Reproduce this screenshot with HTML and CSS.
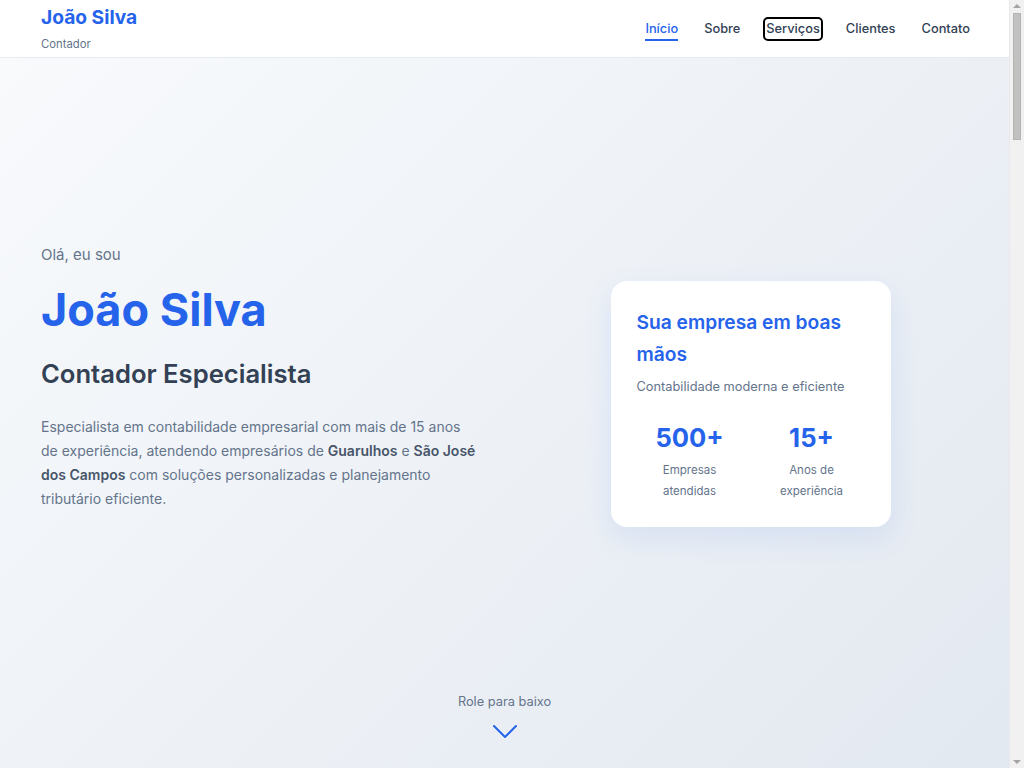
FILE: index.html
```html
<!DOCTYPE html>
<html lang="pt-BR">
<head>
<meta charset="utf-8">
<title>João Silva - Contador</title>
<link rel="stylesheet" href="styles.css">
</head>
<body>
<div class="page">
<header class="site-header">
  <div class="container header-inner">
    <div class="brand">
      <div class="brand-name">João Silva</div>
      <div class="brand-role">Contador</div>
    </div>
    <nav class="nav">
      <a href="#inicio" class="nav-link active">Início</a>
      <a href="#sobre" class="nav-link">Sobre</a>
      <a href="#servicos" class="nav-link focused">Serviços</a>
      <a href="#clientes" class="nav-link">Clientes</a>
      <a href="#contato" class="nav-link">Contato</a>
    </nav>
  </div>
</header>

<main>
  <section class="hero" id="inicio">
    <div class="container hero-grid">
      <div class="hero-text">
        <p class="hero-greeting">Olá, eu sou</p>
        <h1 class="hero-name">João Silva</h1>
        <h2 class="hero-title">Contador Especialista</h2>
        <p class="hero-desc">Especialista em contabilidade empresarial com mais de 15 anos de experiência, atendendo empresários de <strong>Guarulhos</strong> e <strong>São José dos Campos</strong> com soluções personalizadas e planejamento tributário eficiente.</p>
      </div>
      <div class="hero-card">
        <h3 class="card-title">Sua empresa em boas mãos</h3>
        <p class="card-sub">Contabilidade moderna e eficiente</p>
        <div class="stats">
          <div class="stat">
            <div class="stat-num">500+</div>
            <div class="stat-label">Empresas atendidas</div>
          </div>
          <div class="stat">
            <div class="stat-num">15+</div>
            <div class="stat-label">Anos de experiência</div>
          </div>
        </div>
      </div>
    </div>
    <div class="scroll-hint">
      <span>Role para baixo</span>
      <svg width="26" height="16" viewBox="0 0 26 16" fill="none" stroke="#2563eb" stroke-width="2" stroke-linecap="round" stroke-linejoin="round"><path d="M2 2 L13 13 L24 2"/></svg>
    </div>
  </section>

  <section class="section" id="sobre">
    <div class="container"><h2 class="section-title">Sobre</h2></div>
  </section>
  <section class="section" id="servicos">
    <div class="container"><h2 class="section-title">Serviços</h2></div>
  </section>
  <section class="section" id="clientes">
    <div class="container"><h2 class="section-title">Clientes</h2></div>
  </section>
  <section class="section" id="contato">
    <div class="container"><h2 class="section-title">Contato</h2></div>
  </section>
</main>
</div>

<div class="scrollbar" aria-hidden="true">
  <div class="sb-arrow sb-up"></div>
  <div class="sb-thumb"></div>
  <div class="sb-arrow sb-down"></div>
</div>
</body>
</html>
```

FILE: styles.css
```css
* { box-sizing: border-box; }

html, body {
  margin: 0;
  padding: 0;
  height: 100%;
  overflow: hidden;
}

body {
  font-family: Inter, "Noto Sans", sans-serif;
  color: #1e293b;
  background: #ffffff;
}

.page {
  margin-right: 15px;
}

.container {
  padding: 0 38px 0 41px;
}

/* header */
.site-header {
  background: #ffffff;
  border-bottom: 1px solid #e5eaf3;
  height: 58px;
}

.header-inner {
  display: flex;
  align-items: center;
  justify-content: space-between;
  height: 57px;
}

.brand-name {
  font-size: 19.2px;
  font-weight: 700;
  color: #2563eb;
  line-height: 24px;
}

.brand-role {
  font-size: 11.3px;
  color: #64748b;
  line-height: 16px;
  margin-top: 7px;
}

.nav {
  display: flex;
  gap: 24px;
  align-items: center;
}

.nav-link {
  font-size: 12.8px;
  font-weight: 500;
  color: #334155;
  text-decoration: none;
  line-height: 20px;
  padding: 0 1px;
  position: relative;
}

.nav-link.active {
  color: #2563eb;
}

.nav-link.active::after {
  content: "";
  position: absolute;
  left: 1px;
  right: 1px;
  bottom: -2px;
  height: 2px;
  background: #2563eb;
}

.nav-link.focused {
  outline: 2px solid #000;
  outline-offset: 0;
  border-radius: 3px;
}

/* hero */
.hero {
  min-height: 768px;
  background: linear-gradient(135deg, #f8fafc 0%, #e2e8f0 100%);
  padding-top: 185px;
}

.hero-grid {
  display: grid;
  grid-template-columns: 1fr 1fr;
  gap: 48px;
  align-items: start;
}

.hero-greeting {
  margin: 0;
  font-size: 15px;
  line-height: 24px;
  color: #64748b;
}

.hero-name {
  margin: 16px 0 0;
  font-size: 45px;
  line-height: 54px;
  font-weight: 700;
  color: #2563eb;
}

.hero-title {
  margin: 20px 0 0;
  font-size: 25.6px;
  line-height: 33px;
  font-weight: 600;
  color: #334155;
}

.hero-desc {
  margin: 24.5px 0 0;
  max-width: 439px;
  font-size: 14px;
  line-height: 24px;
  color: #64748b;
}

.hero-desc strong {
  color: #475569;
  font-weight: 600;
}

.hero-card {
  justify-self: center;
  width: 280px;
  background: #ffffff;
  border-radius: 16px;
  padding: 25px 26px 25.5px;
  box-shadow: 0 10px 30px rgba(37, 99, 235, 0.10);
  margin-top: 38px;
}

.card-title {
  margin: 0;
  font-size: 19.2px;
  line-height: 32px;
  font-weight: 600;
  color: #2563eb;
}

.card-sub {
  margin: 7px 0 0;
  font-size: 12.8px;
  line-height: 20px;
  color: #64748b;
}

.stats {
  display: grid;
  grid-template-columns: 1fr 1fr;
  gap: 16px;
  margin-top: 25px;
  text-align: center;
}

.stat-num {
  font-size: 25.6px;
  line-height: 32px;
  font-weight: 700;
  color: #2563eb;
}

.stat-label {
  margin-top: 5.5px;
  font-size: 11.5px;
  line-height: 21px;
  color: #64748b;
}

.scroll-hint {
  display: flex;
  flex-direction: column;
  align-items: center;
  gap: 13px;
  margin-top: 165px;
  font-size: 12.8px;
  line-height: 19px;
  color: #64748b;
}

.section {
  padding: 80px 0;
  min-height: 930px;
  background: #ffffff;
}

.section-title {
  margin: 0;
  font-size: 32px;
  color: #1e293b;
}

/* browser scrollbar as in the screenshot */
.scrollbar {
  position: fixed;
  top: 0;
  right: 0;
  width: 15px;
  height: 100vh;
  background: #f1f1f1;
  border-left: 1px solid #e9e9e9;
}

.sb-thumb {
  position: absolute;
  top: 13px;
  left: 3px;
  width: 8px;
  height: 127px;
  background: #c1c1c1;
  border: 1px solid #b4b4b4;
}

.sb-arrow {
  position: absolute;
  left: 3px;
  width: 0;
  height: 0;
  border-left: 4px solid transparent;
  border-right: 4px solid transparent;
}

.sb-up {
  top: 4px;
  border-bottom: 4px solid #a3a3a3;
}

.sb-down {
  bottom: 4px;
  border-top: 4px solid #a3a3a3;
}
```
